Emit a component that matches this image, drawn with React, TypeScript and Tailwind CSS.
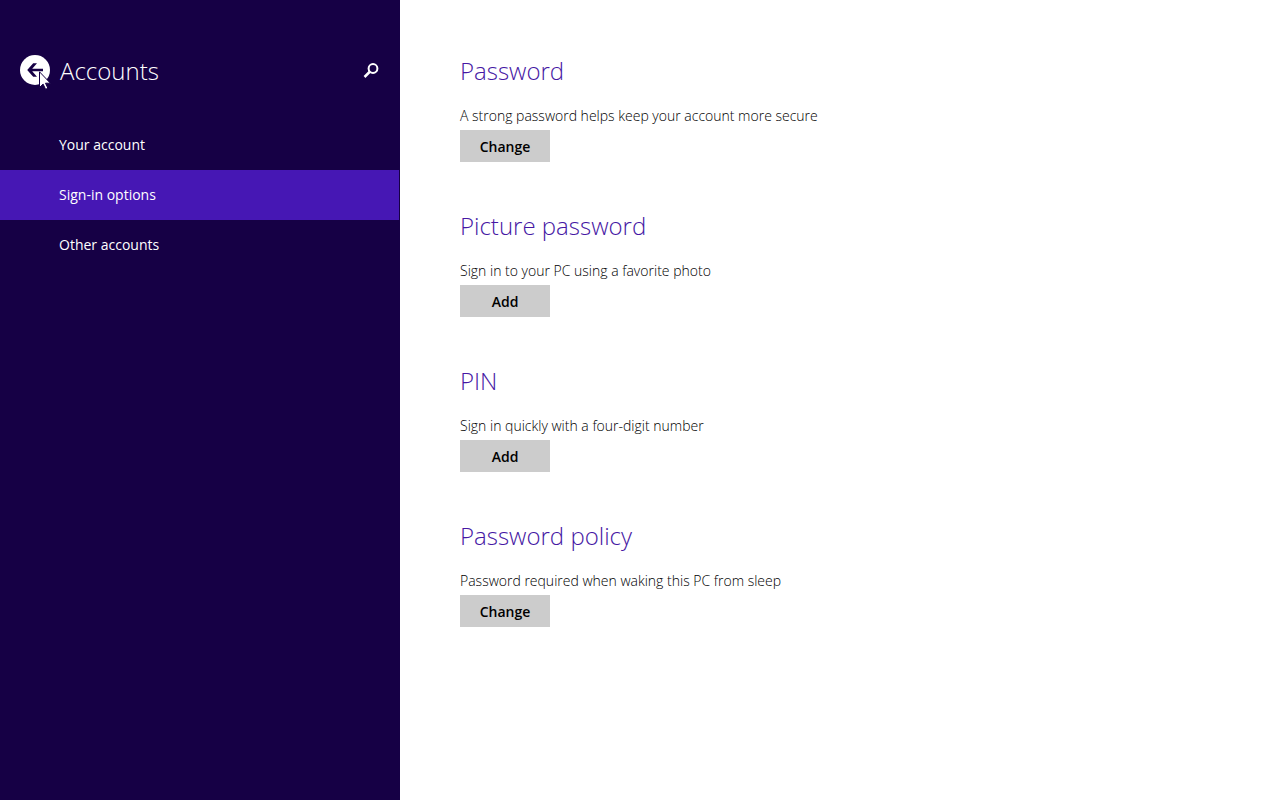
const nav = ["Your account", "Sign-in options", "Other accounts"];

const sections = [
  { title: "Password", text: "A strong password helps keep your account more secure", action: "Change" },
  { title: "Picture password", text: "Sign in to your PC using a favorite photo", action: "Add" },
  { title: "PIN", text: "Sign in quickly with a four-digit number", action: "Add" },
  { title: "Password policy", text: "Password required when waking this PC from sleep", action: "Change" },
];

export default function App() {
  return (
    <div className="flex min-h-screen bg-white font-['Open_Sans','Noto_Sans',sans-serif]">
      <aside className="w-100 shrink-0 bg-[#160045] pt-[50px] text-white">
        <header className="flex h-10 items-center px-5">
          <div className="relative mr-[10px] h-[30px]">
            <button aria-label="Back" className="block size-[30px] rounded-full bg-white">
              <svg viewBox="0 0 30 30" className="size-[30px]" fill="#160045">
                <path d="M7.2 15L13.2 8.3H17L12.2 13.7H23V16.3H12.2L17 21.7H13.2Z" />
              </svg>
            </button>
            <svg viewBox="0 0 12 19" className="absolute top-4 left-[19px] h-[19px] w-3" aria-hidden="true">
              <path d="M.5.8v15.7l3.6-3.4 2.5 5.2 2.3-1-2.4-5.1h4.9z" fill="#fff" stroke="#160045" />
            </svg>
          </div>
          <h1 className="flex-1 pt-0.5 text-2xl leading-10 font-[350]">Accounts</h1>
          <button aria-label="Search" className="block size-[17px]">
            <svg viewBox="0 0 17 17" className="size-[17px]" fill="none" stroke="currentColor" strokeWidth="2">
              <circle cx="10" cy="6.5" r="4.4" />
              <path d="M7 9.5l-5.5 5.5" strokeWidth="2.5" />
            </svg>
          </button>
        </header>
        <nav className="mt-[30px] pr-px">
          {nav.map((item) => (
            <a
              key={item}
              href="#"
              className={`flex h-[50px] items-center pl-[59px] text-sm ${item === "Sign-in options" ? "bg-[#4617b4]" : ""}`}
            >
              {item}
            </a>
          ))}
        </nav>
      </aside>
      <main className="flex flex-1 flex-col gap-[43px] px-15 pt-[50px]">
        {sections.map((s) => (
          <section key={s.title}>
            <h2 className="text-2xl leading-[42px] font-[350] text-[#4617a4]">{s.title}</h2>
            <p className="mt-[14px] text-sm leading-5 font-[350] text-black">{s.text}</p>
            <button className="mt-1 block h-8 w-[90px] bg-[#cccccc] pt-px text-sm font-semibold text-black">{s.action}</button>
          </section>
        ))}
      </main>
    </div>
  );
}
